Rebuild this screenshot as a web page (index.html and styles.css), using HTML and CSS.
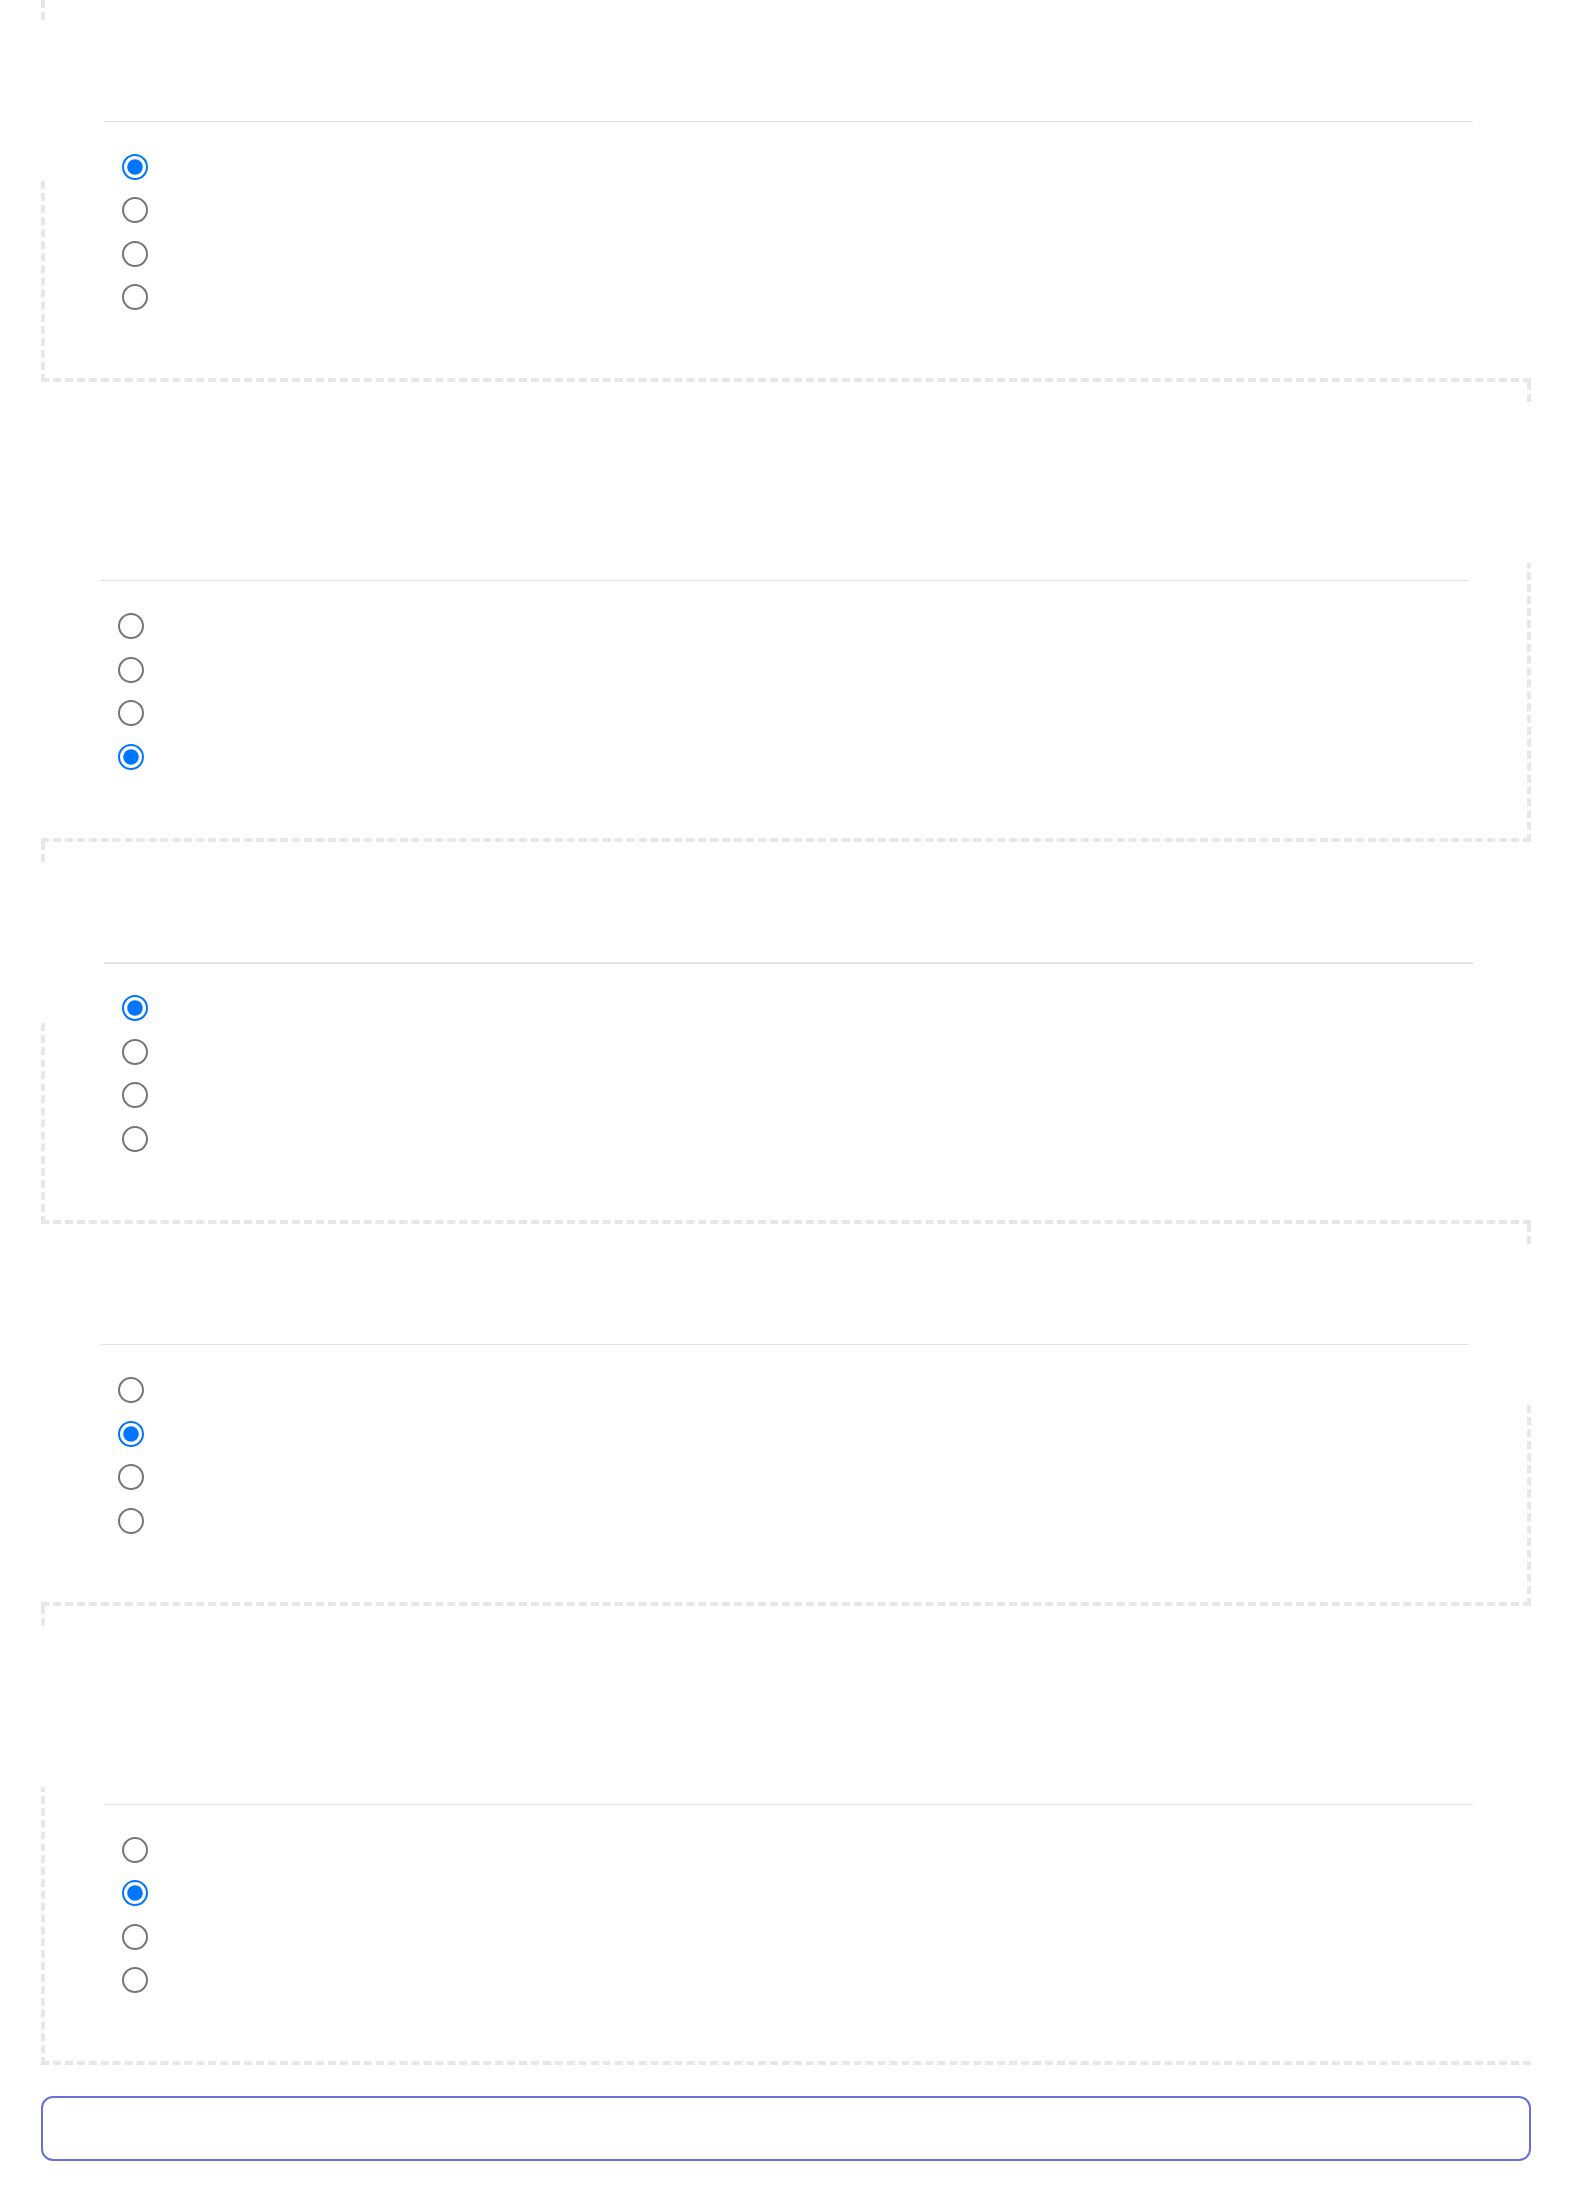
FILE: index.html
```html
<!DOCTYPE html>
<html lang="en">
<head>
    <meta charset="UTF-8">
    <meta name="viewport" content="width=device-width, initial-scale=1.0">
    <title>Quiz</title>
    <link rel="stylesheet" href="styles.css">
</head>
<body>

    <main class="quiz">

        <section class="question side-left">
            <div class="question-head"></div>
            <hr class="divider">
            <div class="options">
                <input type="radio" name="q1" checked>
                <input type="radio" name="q1">
                <input type="radio" name="q1">
                <input type="radio" name="q1">
            </div>
        </section>

        <section class="question side-right tall">
            <div class="question-head"></div>
            <hr class="divider">
            <div class="options">
                <input type="radio" name="q2">
                <input type="radio" name="q2">
                <input type="radio" name="q2">
                <input type="radio" name="q2" checked>
            </div>
        </section>

        <section class="question side-left">
            <div class="question-head"></div>
            <hr class="divider strong">
            <div class="options">
                <input type="radio" name="q3" checked>
                <input type="radio" name="q3">
                <input type="radio" name="q3">
                <input type="radio" name="q3">
            </div>
        </section>

        <section class="question side-right">
            <div class="question-head"></div>
            <hr class="divider">
            <div class="options">
                <input type="radio" name="q4">
                <input type="radio" name="q4" checked>
                <input type="radio" name="q4">
                <input type="radio" name="q4">
            </div>
        </section>

        <section class="question side-left tall">
            <div class="question-head"></div>
            <hr class="divider">
            <div class="options">
                <input type="radio" name="q5">
                <input type="radio" name="q5" checked>
                <input type="radio" name="q5">
                <input type="radio" name="q5">
            </div>
        </section>

        <div class="answer-box"></div>

    </main>

</body>
</html>
```

FILE: styles.css
```css
body {
    margin: 0;
    font-family: "Liberation Sans", Arial, sans-serif;
    background-color: #fff;
}
.quiz {
    padding: 0 41px 25px 41px;
}
.question {
    position: relative;
    padding: 0 58px 0 59px;
    border-bottom: 4px dashed #e5e7eb;
}
.side-left {
    border-left: 4px dashed #e5e7eb;
}
.side-right {
    border-right: 4px dashed #e5e7eb;
}
/* white strip hiding the upper part of the side border */
.question::before {
    content: "";
    position: absolute;
    top: 24px;
    width: 4px;
    height: 157px;
    background-color: #fff;
}
.side-left::before {
    left: -4px;
}
.side-right::before {
    right: -4px;
}
.question-head {
    height: 120.5px;
}
.tall .question-head {
    height: 198px;
}
.divider {
    margin: 0;
    border: 0;
    border-top: 1px solid #e3e3e3;
}
.divider.strong {
    border-top: 2px solid #e2e2e2;
    margin-bottom: -1px;
}
.options {
    display: flex;
    flex-direction: column;
    align-items: flex-start;
    gap: 17.5px;
    padding: 32px 0 68px 18px;
}
.options input {
    width: 13px;
    height: 13px;
    margin: 0;
    zoom: 2;
}
.answer-box {
    margin-top: 31px;
    height: 61px;
    border: 2px solid #6571d9;
    border-radius: 12px;
}
```
